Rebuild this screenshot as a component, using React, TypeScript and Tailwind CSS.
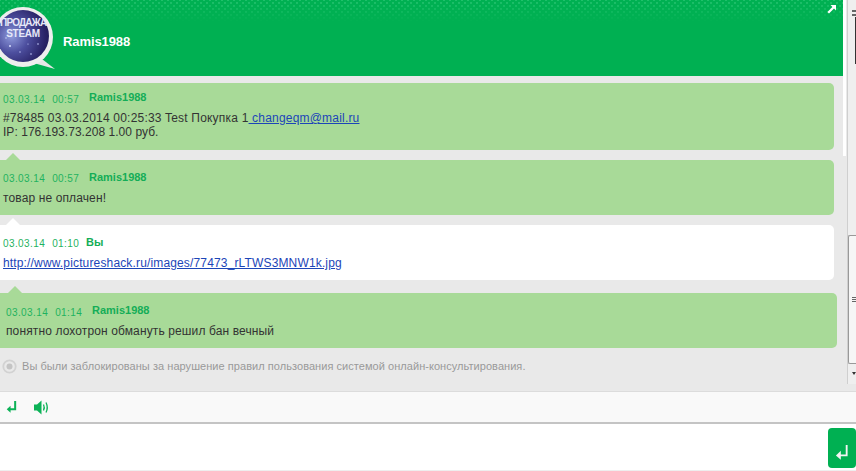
const font = "font-['Liberation_Sans',Arial,sans-serif]";

function Avatar() {
  return (
    <svg width="56" height="70" viewBox="0 0 56 70" className="block">
      <defs>
        <radialGradient id="sp" cx="0.28" cy="0.5" r="0.8">
          <stop offset="0" stopColor="#8f9bdc" />
          <stop offset="0.4" stopColor="#4d4f9f" />
          <stop offset="0.8" stopColor="#2a2468" />
          <stop offset="1" stopColor="#1c1850" />
        </radialGradient>
      </defs>
      <path d="M38 56 L55 69 L30 62 Z" fill="#e6e6e6" />
      <circle cx="23" cy="37" r="30" fill="#eeeeee" />
      <circle cx="23" cy="36" r="26" fill="url(#sp)" />
      <circle cx="10" cy="46" r="1" fill="#d8deff" />
      <circle cx="20" cy="52" r="0.7" fill="#c8d0ff" />
      <circle cx="31" cy="54" r="0.8" fill="#c8d0ff" />
      <circle cx="38" cy="44" r="0.8" fill="#c8d0ff" />
      <circle cx="28" cy="44" r="0.6" fill="#c8d0ff" />
      <circle cx="6" cy="38" r="0.7" fill="#d8deff" />
    </svg>
  );
}

function ReplyIcon({ className, width = 2.2 }: { className?: string; width?: number }) {
  return (
    <svg viewBox="0 0 12 14" className={className} fill="none" stroke="currentColor">
      <path d="M10 0.5 V9.5 H3" strokeWidth={width} />
      <path d="M5 5.5 L0.8 9.5 L5 13.2 Z" fill="currentColor" stroke="none" />
    </svg>
  );
}

function Message({
  date,
  time,
  name,
  white,
  shift,
  gap,
  nameGap,
  nameTop = "top-[-1px]",
  children,
  tail,
  className,
}: {
  date: string;
  time: string;
  name: string;
  white?: boolean;
  shift?: boolean;
  gap: string;
  nameGap: string;
  nameTop?: string;
  children: React.ReactNode;
  tail?: string;
  className?: string;
}) {
  return (
    <div className={`relative ${white ? "bg-white" : "bg-[#a8da98]"} rounded-r-[5px] ${className ?? ""}`}>
      {tail && (
        <div className={`absolute top-[-7px] w-0 h-0 border-x-[7px] border-x-transparent border-b-[7px] ${shift ? "left-[8px]" : "left-[6px]"} ${tail}`} />
      )}
      <div className={`${shift ? "pl-[6px]" : "pl-[3px]"} ${gap}`}>
        <div className="flex items-baseline h-[14px]">
          <span className="text-[10px] tracking-[0.4px] text-[#1fb25f] w-[81px] whitespace-nowrap">
            {date}
            <span className="ml-[7px]">{time}</span>
          </span>
          <span className={`text-[11px] font-bold text-[#14ad57] ${nameGap} relative ${nameTop}`}>{name}</span>
        </div>
        {children}
      </div>
    </div>
  );
}

export default function App() {
  return (
    <div className={`${font} w-[856px] h-[471px] overflow-hidden bg-[#e9e9e9] flex flex-col text-[12px] text-[#333]`}>
      <div className="flex h-[391px]">
        <div className="w-[843px] flex flex-col">
          <header className="relative h-[76px] bg-[#00b052] flex items-center pl-[63px] shrink-0">
            <div className="absolute top-0 left-0 right-0 h-[22px] opacity-50 bg-[radial-gradient(#3fd084_0.8px,transparent_1px),radial-gradient(#3fd084_0.8px,transparent_1px)] bg-[length:6px_6px] [background-position:0_0,3px_3px] [mask-image:linear-gradient(#000,transparent)]" />
            <div className="absolute left-0 top-0">
              <Avatar />
              <div className="absolute left-0 w-[46px] top-[17px] text-center text-[#e6e8f8] font-bold text-[10px] leading-[11px] tracking-[-0.8px] whitespace-nowrap">
                ПРОДАЖА
                <br />
                <span className="tracking-[-0.3px]">STEAM</span>
              </div>
            </div>
            <span className="relative text-white font-bold text-[13px] tracking-[-0.1px] top-[4px]">Ramis1988</span>
            <svg viewBox="0 0 9 9" className="absolute right-[7px] top-[5px] w-[9px] h-[9px] text-white" fill="currentColor">
              <path d="M3.5 0 H9 V5.5 L7 3.6 L2 8.6 L0.4 7 L5.4 2 Z" />
            </svg>
          </header>
          <div className="flex-1 flex flex-col pt-[7px] relative">
            <div className="w-[834px]">
              <Message date="03.03.14" time="00:57" name="Ramis1988" gap="pt-[8px]" nameGap="ml-[5px]" nameTop="top-[-2px]" className="h-[67px]">
                <div className="mt-[6px] leading-[14px] whitespace-nowrap">
                  <span className="tracking-[0.2px]">
                    #78485 03.03.2014 00:25:33 Test Покупка 1
                    <a className="text-[#1c45b8] underline"> changeqm@mail.ru</a>
                  </span>
                  <br />
                  <span className="tracking-[0.04px]">IP: 176.193.73.208 1.00 руб.</span>
                </div>
              </Message>
            </div>
            <div className="w-[834px] mt-[10px]">
              <Message date="03.03.14" time="00:57" name="Ramis1988" gap="pt-[10px]" nameGap="ml-[5px]" tail="border-b-[#a8da98]" className="h-[55px]">
                <div className="mt-[7px] leading-[14px] tracking-[0.12px]">товар не оплачен!</div>
              </Message>
            </div>
            <div className="w-[834px] mt-[10px]">
              <Message date="03.03.14" time="01:10" name="Вы" white gap="pt-[10px]" nameGap="ml-[2px]" tail="border-b-white" className="h-[55px]">
                <div className="mt-[7px] leading-[14px] tracking-[0.15px]">
                  <a className="text-[#1c45b8] underline">http://www.pictureshack.ru/images/77473_rLTWS3MNW1k.jpg</a>
                </div>
              </Message>
            </div>
            <div className="w-[837px] mt-[13px]">
              <Message date="03.03.14" time="01:14" name="Ramis1988" shift gap="pt-[11px]" nameGap="ml-[5px]" nameTop="top-[-2px]" tail="border-b-[#a8da98]" className="h-[55px]">
                <div className="mt-[6px] leading-[14px] tracking-[0.12px]">понятно лохотрон обмануть решил бан вечный</div>
              </Message>
            </div>
            <div className="flex items-center h-[14px] mt-[11px] pl-[2px] text-[11px] tracking-[0.05px] text-[#999]">
              <svg viewBox="0 0 15 15" className="w-[15px] h-[15px] mr-[5px]">
                <circle cx="7.5" cy="7.5" r="6.2" fill="none" stroke="#d2d2d2" strokeWidth="1.8" />
                <circle cx="7.5" cy="7.5" r="3" fill="#c4c4c4" />
              </svg>
              Вы были заблокированы за нарушение правил пользования системой онлайн-консультирования.
            </div>
          </div>
        </div>
        <div className="w-[13px] flex items-start">
          <div className="w-[3px] h-[156px] bg-white" />
          <div className="w-[1px]" />
          <div className="w-[9px] h-[384px] bg-[#efefef] border-l border-l-[#cfcfcf] flex flex-col items-end">
            <div className="h-[10px] shrink-0" />
            <div className="w-[4px] h-[2px] border-y border-y-[#666] shrink-0" />
            <div className="h-[2px] shrink-0" />
            <div className="w-[4px] h-[2px] border-y border-y-[#666] shrink-0" />
            <div className="w-[1px] h-[47px] bg-[#333] mt-[1px] shrink-0" />
            <div className="h-[171px] shrink-0" />
            <div className="w-full h-[129px] bg-[#f6f6f6] border border-[#999] border-r-0 rounded-tl-[2px] rounded-bl-[2px] flex flex-col items-end justify-center gap-px shrink-0">
              <div className="w-[4px] h-px bg-[#666]" />
              <div className="w-[4px] h-px bg-[#666]" />
              <div className="w-[4px] h-px bg-[#666]" />
            </div>
            <div className="w-0 h-0 mt-[8px] border-x-[2px] border-x-transparent border-t-[3px] border-t-[#333] shrink-0" />
          </div>
        </div>
      </div>
      <div className="h-[33px] shrink-0 bg-[#f9f9f9] border-t border-t-[#dcdcdc] border-b-2 border-b-[#c4c4c4] flex items-center pl-[6px] gap-[17px] text-[#0cb257]">
        <ReplyIcon className="w-[11px] h-[14px]" />
        <svg viewBox="0 0 16 14" className="w-[16px] h-[15px]">
          <path d="M0 4 H3 L7.5 0 V14 L3 10 H0 Z" fill="currentColor" />
          <path d="M9.5 4 Q11 7 9.5 10 M12 2 Q14.5 7 12 12" fill="none" stroke="currentColor" strokeWidth="1.3" />
        </svg>
      </div>
      <div className="flex-1 bg-white border-b border-b-[#eeeeee] flex justify-end items-start pt-[4px]">
        <button className="w-[28px] h-[40px] bg-[#00b052] rounded-[4px] flex items-end justify-center pb-[7px] text-[#f4f4f4]">
          <ReplyIcon className="w-[14px] h-[17px]" width={1.6} />
        </button>
      </div>
    </div>
  );
}
